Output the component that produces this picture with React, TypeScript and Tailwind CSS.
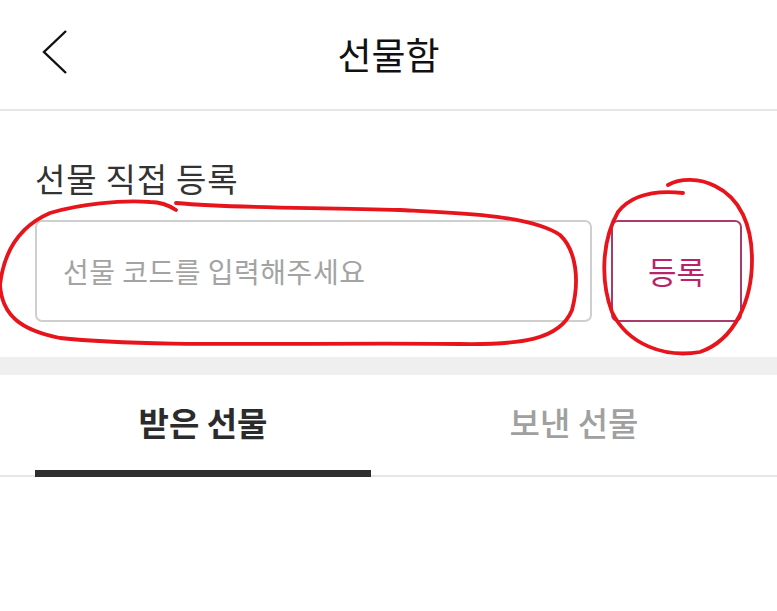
const font = { fontFamily: '"Noto Sans CJK KR", "Noto Sans", sans-serif' };

const BackIcon = () => (
  <svg width="28" height="46" viewBox="0 0 28 46" fill="none">
    <path d="M25 2 L3 23 L25 44" stroke="#111" strokeWidth="2.4" />
  </svg>
);

// hand-drawn red marks over the input and the button
const Scribbles = () => (
  <svg className="pointer-events-none absolute left-0 top-0" width="777" height="611" viewBox="0 0 777 611" fill="none">
    <path
      d="M176 210 C170 206 160 202 150 202 C120 200 80 204 50 213 C20 226 4 250 0 285 C2 315 20 330 60 338 C150 348 320 342 460 344 C520 345 560 340 572 310 C580 280 576 250 560 235 C530 215 460 213 400 210 C320 207 240 209 176 203"
      stroke="#e8141c"
      strokeWidth="3.8"
      strokeLinecap="round"
    />
    <path
      d="M668 185 C680 178 700 178 715 186 C740 198 752 225 752 260 C752 300 735 340 700 352 C665 358 628 345 612 312 C600 280 602 240 618 212 C632 194 655 190 683 193"
      stroke="#e8141c"
      strokeWidth="3.8"
      strokeLinecap="round"
    />
  </svg>
);

export default function App() {
  return (
    <div className="relative h-[611px] w-[777px] overflow-hidden bg-white" style={font}>
      {/* Header */}
      <div className="relative flex h-[111px] items-center justify-center border-b-2 border-[#e6e6e6]">
        <div className="absolute left-[41px] top-[29px]">
          <BackIcon />
        </div>
        <h1 className="text-[37px] font-normal leading-none text-[#111]">선물함</h1>
      </div>

      {/* Register section */}
      <div className="px-[35px] pb-[35px] pt-[47px]">
        <div className="text-[33px] leading-[40px] tracking-[0.8px] text-[#333]">선물 직접 등록</div>
        <div className="mt-[22px] flex gap-[19px]">
          <div className="flex h-[102px] flex-1 items-center rounded-[7px] border-2 border-[#cfcfcf] px-[26px]">
            <span className="text-[28px] tracking-[0.5px] text-[#a3a3a3]">선물 코드를 입력해주세요</span>
          </div>
          <button className="flex h-[102px] w-[131px] items-center justify-center rounded-[7px] border-2 border-[#a93b6a] text-[31px] font-normal text-[#b8236a]">
            등록
          </button>
        </div>
      </div>

      <div className="h-[18px] bg-[#efefef]" />

      {/* Tabs */}
      <div className="flex h-[102px] border-b-2 border-[#e6e6e6] pl-[35px]">
        <div className="relative flex w-[336px] items-center justify-center pb-[4px]">
          <span className="text-[33px] font-bold text-[#2b2b2b]">받은 선물</span>
          <div className="absolute -bottom-[2px] left-0 right-0 h-[7px] bg-[#2f2f2f]" />
        </div>
        <div className="flex flex-1 items-center justify-center pb-[4px]">
          <span className="text-[33px] font-medium text-[#a0a0a0]">보낸 선물</span>
        </div>
      </div>

      <Scribbles />
    </div>
  );
}
